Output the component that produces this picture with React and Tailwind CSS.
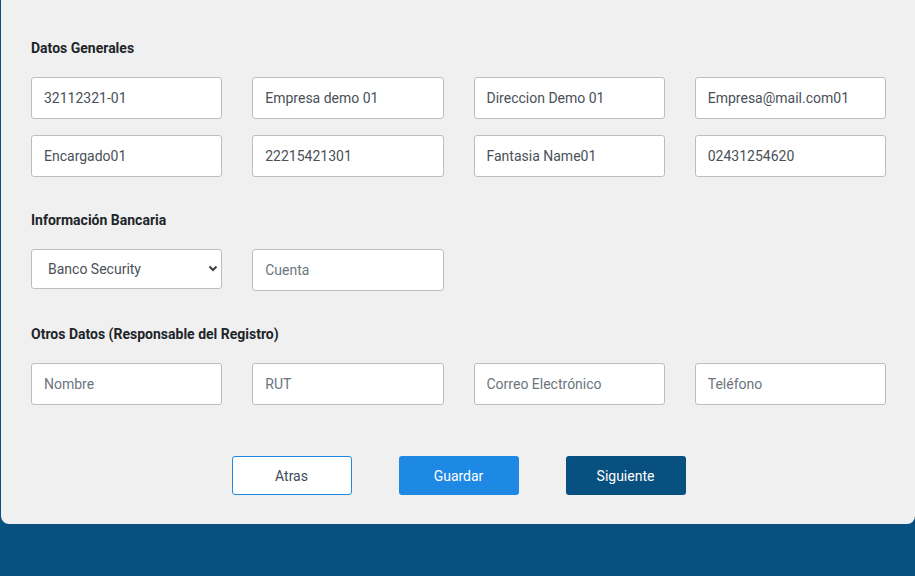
import React, { useState } from 'react';

const inputCls =
  'h-[42px] w-full rounded-[3px] border border-[#bdbdbd] bg-white px-[12px] text-sm text-[#495057] placeholder:text-[#6c757d] outline-none';

const Field = ({ value, placeholder }) => (
  <input type="text" defaultValue={value} placeholder={placeholder} className={inputCls} />
);

const Section = ({ title, children, className = '' }) => (
  <div className={className}>
    <h3 className="mb-[19px] h-5 text-sm leading-5 font-bold text-[#212529]">{title}</h3>
    <div className="grid grid-cols-4 gap-x-[30px] gap-y-[16px]">{children}</div>
  </div>
);

const App = () => {
  const [bank, setBank] = useState('security');

  return (
    <div className="min-h-[576px] bg-[#08507f] font-['Roboto',sans-serif]">
      <div className="ml-[1px] h-[524px] rounded-b-lg bg-[#f0f0f0] pt-[38px] pr-[29px] pl-[30px]">
        <Section title="Datos Generales">
          <Field value="32112321-01" />
          <Field value="Empresa demo 01" />
          <Field value="Direccion Demo 01" />
          <Field value="Empresa@mail.com01" />
          <Field value="Encargado01" />
          <Field value="22215421301" />
          <Field value="Fantasia Name01" />
          <Field value="02431254620" />
        </Section>

        <Section title="Información Bancaria" className="mt-[33px]">
          <div className="relative">
            <select
              value={bank}
              onChange={(e) => setBank(e.target.value)}
              className="h-[40px] w-full appearance-none rounded-[3px] border border-[#bdbdbd] bg-white pl-[16px] text-sm text-[#495057] outline-none"
            >
              <option value="security">Banco Security</option>
              <option value="chile">Banco de Chile</option>
              <option value="estado">BancoEstado</option>
            </select>
            <svg
              className="pointer-events-none absolute top-[16px] right-[4px]"
              width="10"
              height="7"
              viewBox="0 0 10 7"
            >
              <path d="M1.5 1.5 L5 5 L8.5 1.5" fill="none" stroke="#3a3f45" strokeWidth="2" />
            </svg>
          </div>
          <Field placeholder="Cuenta" />
        </Section>

        <Section title="Otros Datos (Responsable del Registro)" className="mt-[33px]">
          <Field placeholder="Nombre" />
          <Field placeholder="RUT" />
          <Field placeholder="Correo Electrónico" />
          <Field placeholder="Teléfono" />
        </Section>

        <div className="mt-[51px] flex justify-center gap-[47px]">
          <button className="h-[39px] w-[120px] rounded-[3px] border border-[#1e88e5] bg-white text-sm text-[#3b4a5c]">
            Atras
          </button>
          <button className="h-[39px] w-[120px] rounded-[3px] bg-[#1e88e5] text-sm text-white">
            Guardar
          </button>
          <button className="h-[39px] w-[120px] rounded-[3px] bg-[#08507f] text-sm text-white">
            Siguiente
          </button>
        </div>
      </div>
    </div>
  );
};

export default App;
